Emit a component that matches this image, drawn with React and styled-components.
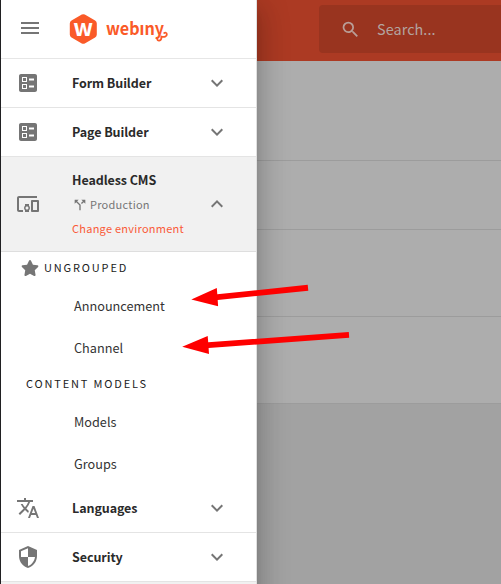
import React from "react";
import styled, { createGlobalStyle } from "styled-components";
import {
  MdMenu, MdSearch, MdBallot, MdDevicesOther, MdCallSplit, MdTranslate,
  MdSecurity, MdExpandMore, MdExpandLess,
} from "react-icons/md";
import { FaStar } from "react-icons/fa";

const GlobalStyle = createGlobalStyle`
  * { box-sizing: border-box; }
  body {
    margin: 0;
    overflow: hidden;
    font-family: "Noto Sans CJK SC", "Noto Sans", sans-serif;
  }
`;

const Page = styled.div`
  position: relative;
  display: flex;
  width: 501px;
  height: 584px;
  overflow: hidden;
  background: #a2a2a2;
`;

const Drawer = styled.aside`
  position: relative;
  z-index: 1;
  flex: none;
  display: flex;
  flex-direction: column;
  width: 257px;
  height: 640px;
  background: #fff;
  border-left: 1px solid #202022;
  border-right: 1px solid #e0e0e0;
  box-shadow: 0 8px 10px -5px rgba(0, 0, 0, 0.2),
    0 16px 24px 2px rgba(0, 0, 0, 0.14), 0 6px 30px 5px rgba(0, 0, 0, 0.12);
`;

const DrawerHeader = styled.header`
  flex: none;
  display: flex;
  align-items: center;
  height: 59px;
  padding: 0 0 2px 17px;
  border-bottom: 1px solid #e6e6e6;
`;

const MenuButton = styled.button`
  display: flex;
  margin: 0 27px 0 0;
  padding: 0;
  border: 0;
  background: none;
  color: #757575;
`;

const Logo = styled.svg`
  display: block;
  width: 112px;
  height: 34px;
  overflow: visible;
  fill: #fa5a28;
`;

const Wordmark = styled.text`
  font-size: 17.5px;
  font-weight: 700;
`;

const MarkLetter = styled.text`
  font-size: 23px;
  font-weight: 700;
  text-anchor: middle;
  fill: #fff;
`;

const Section = styled.div`
  flex: none;
  display: flex;
  align-items: center;
  height: ${(p) => (p.$open ? 95 : 49)}px;
  padding-left: 15px;
  background: ${(p) => (p.$open ? "#f1f1f1" : "#fff")};
  border-bottom: 1px solid ${(p) => (p.$open ? "#dedede" : "#e4e4e4")};
`;

const SectionIcon = styled.span`
  display: flex;
  width: 56px;
  color: #757575;
`;

const SectionBody = styled.div`
  width: 133px;
`;

const SectionTitle = styled.div`
  font-size: 12.5px;
  font-weight: 700;
  line-height: 24px;
  letter-spacing: -0.08px;
  color: #2a2a2a;
  white-space: nowrap;
`;

const Environment = styled.div`
  display: flex;
  align-items: center;
  gap: 2px;
  font-size: 11px;
  line-height: 25px;
  letter-spacing: 0.25px;
  color: #757575;
`;

const EnvironmentLink = styled.a`
  display: block;
  font-size: 11px;
  line-height: 23px;
  letter-spacing: 0.25px;
  color: #fa5a38;
  white-space: nowrap;
`;

const Chevron = styled.span`
  display: flex;
  color: #757575;
`;

const GroupLabel = styled.div`
  flex: none;
  display: flex;
  align-items: center;
  gap: 5px;
  height: 32px;
  padding-left: ${(p) => (p.$icon ? 20 : 25)}px;
  font-size: 11px;
  line-height: 16px;
  letter-spacing: 1.84px;
  color: #212121;

  svg {
    width: 18px;
    height: 16px;
    color: #757575;
  }
`;

const GroupText = styled.span`
  padding-bottom: 2px;
`;

const Item = styled.div`
  flex: none;
  height: 42px;
  padding-left: 73px;
  font-size: 12.7px;
  line-height: 44px;
  color: #333;
`;

const Footer = styled.div`
  flex: 1;
  background: #f1f1f1;
`;

const Main = styled.main`
  flex: 1;
  display: flex;
  flex-direction: column;
`;

const AppBar = styled.div`
  flex: none;
  display: flex;
  height: 61px;
  padding: 5px 0 8px 62px;
  background: #ac3a23;
`;

const SearchField = styled.div`
  flex: 1;
  display: flex;
  align-items: center;
  gap: 16px;
  padding-left: 21px;
  border-radius: 4px 0 0 4px;
  background: #99341f;
  color: #b99e97;
`;

const SearchText = styled.span`
  font-size: 14.4px;
  line-height: 24px;
  letter-spacing: 0.07px;
  color: #b3a4a0;
`;

const ContentRow = styled.div`
  flex: none;
  height: ${(p) => p.$height}px;
  background: #adadad;
  border-bottom: 1px solid #9c9c9c;
`;

const Arrows = styled.svg`
  position: absolute;
  z-index: 2;
  left: 0;
  top: 0;
  fill: #fe0000;
`;

function WebinyLogo() {
  return (
    <Logo viewBox="0 0 112 34">
      <path d="M12.8 3.600Q14.300 2.700 15.800 3.600L26.100 9.600Q27.800 10.600 27.800 12.600V23.400Q27.800 25.400 26.100 26.400L15.800 32.400Q14.300 33.300 12.800 32.400L2.500 26.400Q.8 25.400.8 23.400V12.600Q.8 10.600 2.500 9.600Z" />
      <MarkLetter x="14.3" y="24.6">w</MarkLetter>
      <Wordmark x="37" y="23.5" textLength="58" lengthAdjust="spacingAndGlyphs">
        webıny
      </Wordmark>
      <path
        d="M88.300 27.200C87.600 30.600 92.800 30.800 92.400 25.600C95 26.400 98 25.800 97.800 23.200C97.600 21.600 96.200 21.400 95.200 22"
        fill="none"
        stroke="#fa5a28"
        strokeWidth="1.800"
        strokeLinecap="round"
      />
    </Logo>
  );
}

function NavSection({ icon, title }) {
  return (
    <Section>
      <SectionIcon>{icon}</SectionIcon>
      <SectionBody>
        <SectionTitle>{title}</SectionTitle>
      </SectionBody>
      <Chevron><MdExpandMore size={24} /></Chevron>
    </Section>
  );
}

export default function App() {
  return (
    <Page>
      <GlobalStyle />
      <Drawer>
        <DrawerHeader>
          <MenuButton><MdMenu size={24} /></MenuButton>
          <WebinyLogo />
        </DrawerHeader>
        <NavSection icon={<MdBallot size={24} />} title="Form Builder" />
        <NavSection icon={<MdBallot size={24} />} title="Page Builder" />
        <Section $open>
          <SectionIcon><MdDevicesOther size={24} /></SectionIcon>
          <SectionBody>
            <SectionTitle>Headless CMS</SectionTitle>
            <Environment><MdCallSplit size={16} />Production</Environment>
            <EnvironmentLink>Change environment</EnvironmentLink>
          </SectionBody>
          <Chevron><MdExpandLess size={24} /></Chevron>
        </Section>
        <GroupLabel $icon><FaStar /><GroupText>UNGROUPED</GroupText></GroupLabel>
        <Item>Announcement</Item>
        <Item>Channel</Item>
        <GroupLabel><GroupText>CONTENT MODELS</GroupText></GroupLabel>
        <Item>Models</Item>
        <Item>Groups</Item>
        <NavSection icon={<MdTranslate size={24} />} title="Languages" />
        <NavSection icon={<MdSecurity size={24} />} title="Security" />
        <Footer />
      </Drawer>
      <Main>
        <AppBar>
          <SearchField>
            <MdSearch size={21} />
            <SearchText>Search...</SearchText>
          </SearchField>
        </AppBar>
        <ContentRow $height={100} />
        <ContentRow $height={69} />
        <ContentRow $height={87} />
        <ContentRow $height={87} />
      </Main>
      <Arrows width="501" height="584" viewBox="0 0 501 584">
        <path d="M191.300 299.500 216.800 288 217.300 294.300 307.700 284.800 308.300 290.800 217.700 300 218.100 306.200Z" />
        <path d="M182.200 346.700 207.700 336 208.200 342.300 348.800 331.900 349.200 337.800 208.600 348 209 354Z" />
      </Arrows>
    </Page>
  );
}
